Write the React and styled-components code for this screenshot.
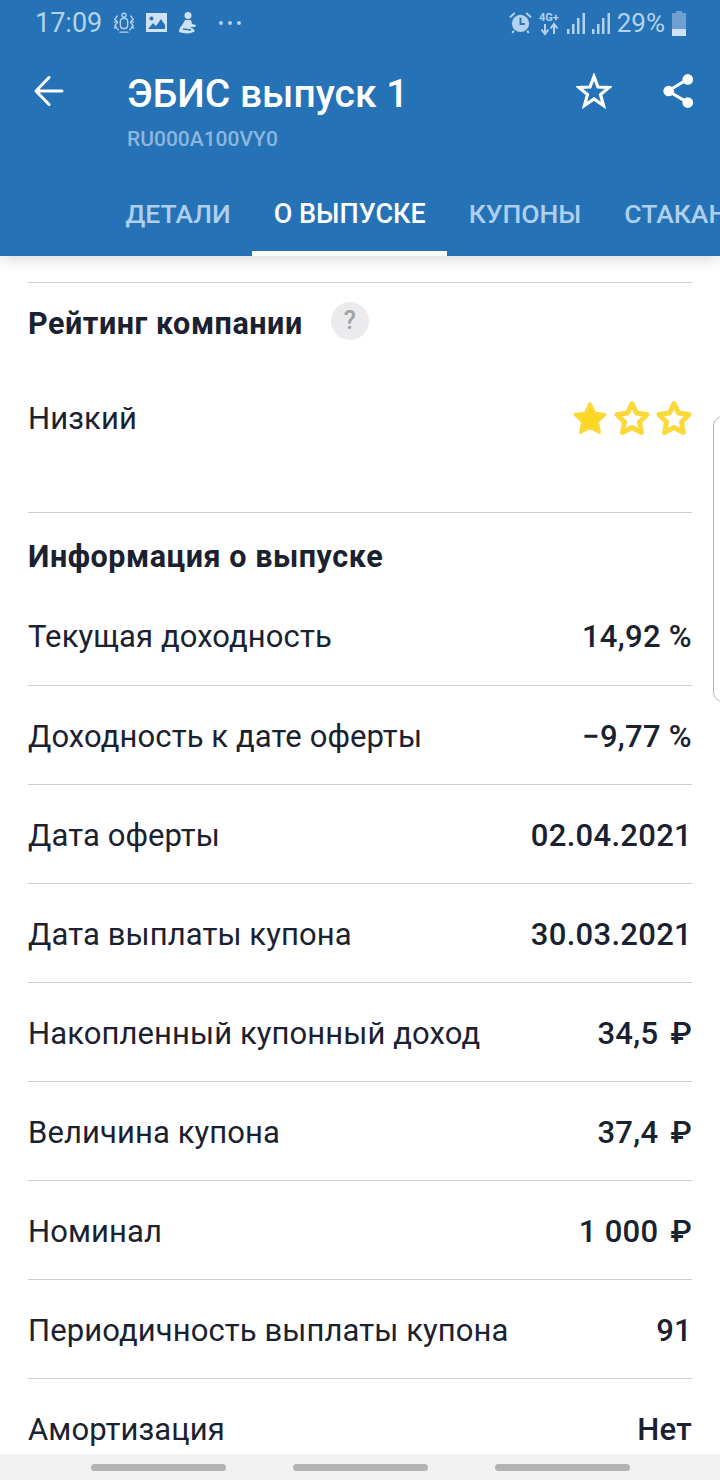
import React from 'react';
import styled, { createGlobalStyle } from 'styled-components';

const GlobalStyle = createGlobalStyle`
  html, body {
    margin: 0;
    padding: 0;
    background: #ffffff;
  }
  * {
    box-sizing: border-box;
  }
`;

const Screen = styled.div`
  position: relative;
  width: 720px;
  height: 1480px;
  display: flex;
  flex-direction: column;
  overflow: hidden;
  font-family: Roboto, "Liberation Sans", sans-serif;
  background: #ffffff;
  color: #1a2130;
`;

const Header = styled.header`
  position: relative;
  z-index: 2;
  flex: 0 0 256px;
  height: 256px;
  display: flex;
  flex-direction: column;
  background: #2573b6;
  box-shadow: 0 4px 14px rgba(0, 0, 0, 0.14);
`;

const StatusBar = styled.div`
  height: 46px;
  padding: 0 34px 0 35px;
  display: flex;
  align-items: center;
  justify-content: space-between;
  color: #b4d2ec;
`;

const StatusGroup = styled.div`
  display: flex;
  align-items: center;
  gap: ${(p) => p.$gap}px;
`;

const StatusText = styled.span`
  font-size: ${(p) => p.$size}px;
  line-height: 30px;
`;

const DotsWrap = styled.span`
  display: flex;
  margin-left: 10px;
`;

const Toolbar = styled.div`
  height: 114px;
  display: flex;
  align-items: flex-start;
  padding-left: 34px;
  padding-right: 26px;
`;

const BackButton = styled.div`
  width: 93px;
  height: 32px;
  margin-top: 30px;
`;

const TitleBlock = styled.div`
  flex: 1;
  padding-top: 23px;
`;

const Title = styled.div`
  font-size: 39px;
  line-height: 50px;
  font-weight: 500;
  color: #ffffff;
`;

const Subtitle = styled.div`
  margin-top: 8px;
  font-size: 21px;
  line-height: 24px;
  font-weight: 500;
  color: #8cb6de;
`;

const ToolIcons = styled.div`
  display: flex;
  gap: 50px;
  margin-top: 27px;
`;

const Tabs = styled.nav`
  flex: 1;
  display: flex;
  padding-left: 104px;
  overflow: hidden;
`;

const Tab = styled.div`
  flex: none;
  height: 100%;
  padding: 24px 21.5px 0;
  line-height: 60px;
  font-size: ${(p) => (p.$active ? 27 : 26.5)}px;
  font-weight: 500;
  white-space: nowrap;
  color: ${(p) => (p.$active ? '#ffffff' : '#aecfee')};
  border-bottom: 5px solid ${(p) => (p.$active ? '#ffffff' : 'transparent')};
`;

const Content = styled.main`
  flex: 1;
  padding: 26px 28px 0;
  overflow: hidden;
`;

const RatingSection = styled.section`
  height: 231px;
  border-top: 1px solid #cfcfcf;
  border-bottom: 1px solid #cfcfcf;
`;

const SectionHeading = styled.div`
  display: flex;
  align-items: center;
  gap: 29px;
  font-size: 30.5px;
  font-weight: 700;
  line-height: 38px;
  letter-spacing: 0.55px;
  color: #1a2130;
`;

const RatingHeading = styled(SectionHeading)`
  padding-top: 22px;
`;

const HelpBadge = styled.span`
  width: 38px;
  height: 38px;
  margin-top: -6px;
  margin-left: -1px;
  border-radius: 50%;
  display: flex;
  align-items: center;
  justify-content: center;
  background: #ebebed;
  color: #a1a1a6;
  font-size: 25px;
  font-weight: 500;
  letter-spacing: 0;
`;

const RatingRow = styled.div`
  margin-top: 56px;
  display: flex;
  align-items: center;
  justify-content: space-between;
  font-size: 31px;
  line-height: 40px;
  letter-spacing: 0.1px;
`;

const Stars = styled.div`
  display: flex;
  gap: 6px;
  margin-top: -2px;
`;

const InfoHeading = styled(SectionHeading)`
  padding-top: 25px;
`;

const Row = styled.div`
  height: 99px;
  padding-top: 2px;
  display: flex;
  align-items: center;
  justify-content: space-between;
  border-bottom: ${(p) => (p.$last ? 'none' : '1px solid #cfcfcf')};
  font-size: 31px;
  letter-spacing: 0.1px;
`;

const FirstRow = styled(Row)`
  height: 110px;
  padding-top: 12px;
`;

const Value = styled.span`
  font-weight: 500;
  letter-spacing: 0.3px;
  color: #1a2130;
`;

const Currency = styled.span`
  margin-left: 4px;
`;

const NavBar = styled.div`
  flex: 0 0 26px;
  display: flex;
  align-items: center;
  background: #f1f1f1;
  padding-left: 91px;
  gap: 67px;
`;

const NavPill = styled.span`
  width: 135px;
  height: 7px;
  border-radius: 4px;
  background: #b3b3b3;
`;

const EdgeHandle = styled.div`
  position: absolute;
  left: 713px;
  top: 416px;
  width: 12px;
  height: 286px;
  border: 1px solid #b5b5b5;
  border-radius: 10px 0 0 10px;
  background: #ffffff;
`;

const AlarmIcon = () => (
  <svg width="23" height="24" viewBox="0 0 24 24">
    <path d="M1 6 L6 1.5 M23 6 L18 1.5" stroke="currentColor" strokeWidth="2" />
    <circle cx="12" cy="12.5" r="9" fill="currentColor" />
    <path d="M5 20 L3.5 22.5 M19 20 L20.500 22.5" stroke="currentColor" strokeWidth="2" />
    <path d="M12 6.500 V13 H16.500" stroke="#2573b6" strokeWidth="2" fill="none" />
  </svg>
);

const NetworkIcon = () => (
  <svg width="21" height="28" viewBox="0 0 21 28">
    <text x="0" y="12" fontSize="11" fontWeight="700" fontFamily="Roboto" fill="currentColor">4G+</text>
    <path d="M6 15 V24 M2.500 20.500 L6 25 L9.500 20.500" stroke="currentColor" strokeWidth="2" fill="none" />
    <path d="M15 25 V16 M11.500 19.500 L15 15 L18.500 19.500" stroke="currentColor" strokeWidth="2" fill="none" />
  </svg>
);

const SignalIcon = () => (
  <svg width="18" height="21" viewBox="0 0 18 21" fill="currentColor">
    <rect x="0" y="16" width="2.500" height="5" />
    <rect x="5" y="11" width="2.500" height="10" />
    <rect x="10" y="5" width="2.500" height="16" />
    <rect x="15.500" y="0" width="2.500" height="21" />
  </svg>
);

const BatteryIcon = () => (
  <svg width="14" height="25" viewBox="0 0 14 25">
    <path d="M4 0 H10 V2 H14 V25 H0 V2 H4 Z" fill="#6fa0cf" />
    <rect x="0" y="18" width="14" height="7" fill="#cfe2f3" />
  </svg>
);

const SealIcon = () => (
  <svg width="22" height="24" viewBox="0 0 24 24" fill="none" stroke="currentColor" strokeWidth="1.500">
    <circle cx="12" cy="3.500" r="2.200" />
    <rect x="8" y="7" width="8" height="11" rx="3.500" />
    <path d="M5 4 L2 8 L5 11 L2 15 L6 20 M19 4 L22 8 L19 11 L22 15 L18 20 M7 22 H17" />
    <path d="M1 11 H4 M1 18 L4 16 M23 11 H20 M23 18 L20 16" />
  </svg>
);

const PictureIcon = () => (
  <svg width="21" height="20" viewBox="0 0 21 20">
    <rect width="21" height="19" fill="#cfe2f3" />
    <circle cx="5.500" cy="5.500" r="2" fill="#2573b6" />
    <path d="M2 16 L7 10 L10 13 L15 6 L19 12 V16 Z" fill="#2573b6" />
  </svg>
);

const FigureIcon = () => (
  <svg width="19" height="22" viewBox="0 0 19 22" fill="#cfe2f3">
    <circle cx="10" cy="3.500" r="3.500" />
    <path d="M7 8 H13 L14 12 L18 13 L17 15 L12 15 C15 16 16 18 17 19 C14 22 6 22 1 20 C1 15 5 13 7 8 Z" />
    <path d="M5 17 L13 18" stroke="#2573b6" strokeWidth="1.500" />
  </svg>
);

const DotsIcon = () => (
  <svg width="24" height="6" viewBox="0 0 24 6" fill="currentColor">
    <circle cx="3" cy="3" r="2" />
    <circle cx="12" cy="3" r="2" />
    <circle cx="21" cy="3" r="2" />
  </svg>
);

const BackIcon = () => (
  <svg width="30" height="30" viewBox="0 0 30 30" fill="none" stroke="#ffffff" strokeWidth="3" strokeLinecap="round" strokeLinejoin="round">
    <path d="M2 15 H28 M15 1.500 L2 15 L15 28.500" />
  </svg>
);

const StarOutline = () => (
  <svg width="36" height="36" viewBox="0 0 36 36" fill="none" stroke="#ffffff" strokeWidth="3.200" strokeLinejoin="miter">
    <path d="M18 3.500 L22 14 L33 14.500 L24.500 21.500 L27.500 32.500 L18 26 L8.500 32.500 L11.500 21.500 L3 14.500 L14 14 Z" />
  </svg>
);

const ShareIcon = () => (
  <svg width="32" height="36" viewBox="0 0 36 40">
    <path d="M7 20 L29 6.500 M7 20 L29 33" stroke="#ffffff" strokeWidth="3.500" />
    <circle cx="7.500" cy="20" r="6" fill="#ffffff" />
    <circle cx="29" cy="7" r="6" fill="#ffffff" />
    <circle cx="29" cy="33" r="6" fill="#ffffff" />
  </svg>
);

const RatingStar = ({ filled }) => (
  <svg width="36" height="36" viewBox="0 0 36 36">
    <path
      d="M18 3.500 L22.500 13 L33 14.500 L25.500 22 L27.500 32.500 L18 27.500 L8.500 32.500 L10.500 22 L3 14.500 L13.500 13 Z"
      fill={filled ? '#fbd722' : '#ffffff'}
      stroke="#fbd93a"
      strokeWidth={filled ? 3 : 5}
      strokeLinejoin="round"
    />
  </svg>
);

const rows = [
  ['Доходность к дате оферты', '−9,77 %'],
  ['Дата оферты', '02.04.2021'],
  ['Дата выплаты купона', '30.03.2021'],
  ['Накопленный купонный доход', '34,5', true],
  ['Величина купона', '37,4', true],
  ['Номинал', '1 000', true],
  ['Периодичность выплаты купона', '91'],
];

const App = () => (
  <Screen>
    <GlobalStyle />
    <Header>
      <StatusBar>
        <StatusGroup $gap={11}>
          <StatusText $size={27}>17:09</StatusText>
          <SealIcon />
          <PictureIcon />
          <FigureIcon />
          <DotsWrap>
            <DotsIcon />
          </DotsWrap>
        </StatusGroup>
        <StatusGroup $gap={7}>
          <AlarmIcon />
          <NetworkIcon />
          <SignalIcon />
          <SignalIcon />
          <StatusText $size={26}>29%</StatusText>
          <BatteryIcon />
        </StatusGroup>
      </StatusBar>
      <Toolbar>
        <BackButton>
          <BackIcon />
        </BackButton>
        <TitleBlock>
          <Title>ЭБИС выпуск 1</Title>
          <Subtitle>RU000A100VY0</Subtitle>
        </TitleBlock>
        <ToolIcons>
          <StarOutline />
          <ShareIcon />
        </ToolIcons>
      </Toolbar>
      <Tabs>
        <Tab>ДЕТАЛИ</Tab>
        <Tab $active>О ВЫПУСКЕ</Tab>
        <Tab>КУПОНЫ</Tab>
        <Tab>СТАКАН</Tab>
      </Tabs>
    </Header>
    <Content>
      <RatingSection>
        <RatingHeading>
          Рейтинг компании
          <HelpBadge>?</HelpBadge>
        </RatingHeading>
        <RatingRow>
          <span>Низкий</span>
          <Stars>
            <RatingStar filled />
            <RatingStar />
            <RatingStar />
          </Stars>
        </RatingRow>
      </RatingSection>
      <InfoHeading>Информация о выпуске</InfoHeading>
      <FirstRow>
        <span>Текущая доходность</span>
        <Value>14,92 %</Value>
      </FirstRow>
      {rows.map(([label, value, rub]) => (
        <Row key={label}>
          <span>{label}</span>
          <Value>
            {value}
            {rub && <Currency> ₽</Currency>}
          </Value>
        </Row>
      ))}
      <Row $last>
        <span>Амортизация</span>
        <Value>Нет</Value>
      </Row>
    </Content>
    <NavBar>
      <NavPill />
      <NavPill />
      <NavPill />
    </NavBar>
    <EdgeHandle />
  </Screen>
);

export default App;
